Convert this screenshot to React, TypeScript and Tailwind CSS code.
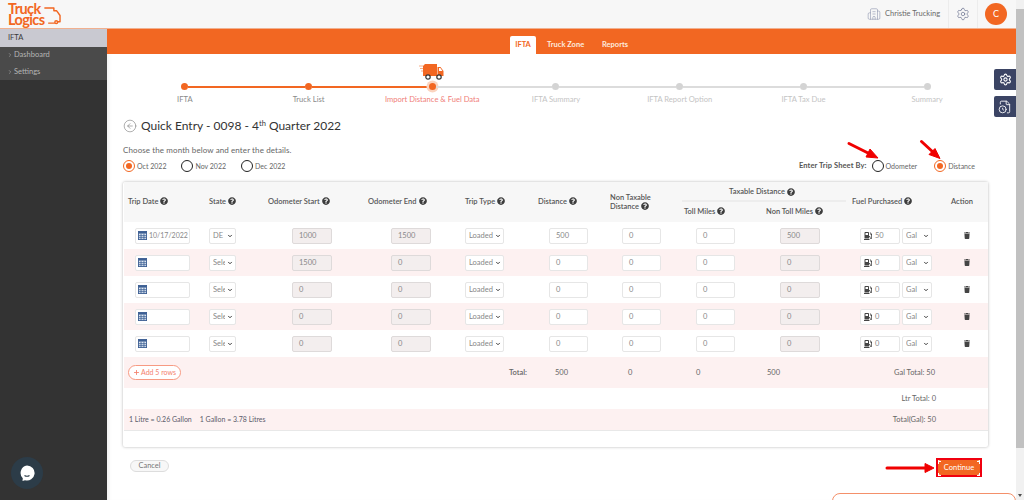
import React from "react";
import { Building2, Settings, ChevronRight, ChevronDown, CircleArrowLeft, FileClock, Plus } from "lucide-react";
import { FaQuestionCircle, FaTrash, FaGasPump } from "react-icons/fa";

const GRID = "grid grid-cols-[76px_62px_99px_100px_74px_73px_74px_84px_80px_100px_41px]";

function Help() {
  return <FaQuestionCircle className="inline-block w-[8px] h-[8px] text-[#3d3d3d] ml-[2px] align-[-1px]" />;
}

function Cal() {
  return (
    <svg viewBox="0 0 10 10" className="w-[9px] h-[9px] shrink-0">
      <rect x="0.5" y="0.5" width="9" height="9" fill="#dfe7f2" stroke="#3c5f93" />
      <rect x="0.5" y="0.5" width="9" height="2.4" fill="#3c5f93" />
      <path d="M3.4 3v6.5M6.6 3v6.5M.5 5.2h9M.5 7.4h9" stroke="#3c5f93" strokeWidth="0.9" />
    </svg>
  );
}

function Radio({ on, label, cls }: { on?: boolean; label: string; cls?: string }) {
  return (
    <span className={"flex items-center gap-[2px] " + (cls || "")}>
      <span className={"w-3 h-3 rounded-full border-[1.5px] flex items-center justify-center " + (on ? "border-[#f26722]" : "border-[#222]")}>
        {on && <span className="w-[6px] h-[6px] rounded-full bg-[#f26722]" />}
      </span>
      <span className="text-[7px] text-[#666]">{label}</span>
    </span>
  );
}

function Box({ v, ro, w = "w-10" }: { v?: string; ro?: boolean; w?: string }) {
  return (
    <div className={`${w} h-4 rounded-[2px] border flex items-center pl-[6px] text-[7.5px] text-[#888] ${ro ? "bg-[#f3eeee] border-[#dedada]" : "bg-white border-[#e6e6e6]"}`}>
      {v}
    </div>
  );
}

function Sel({ v, w, tw }: { v: string; w: string; tw: string }) {
  return (
    <div className={`${w} h-4 rounded-[2px] border border-[#e6e6e6] bg-white text-[7.5px] text-[#888] pl-[3px] flex items-center justify-between pr-[2px]`}>
      <span className={`${tw} overflow-hidden whitespace-nowrap`}>{v}</span>
      <ChevronDown className="w-[6px] h-[6px] text-[#222] shrink-0" strokeWidth={3.5} />
    </div>
  );
}

const rows = [
  { date: "10/17/2022", st: "DE", os: "1000", oe: "1500", d: "500", nt: "500", f: "50" },
  { date: "", st: "Select", os: "1500", oe: "0", d: "0", nt: "0", f: "0" },
  { date: "", st: "Select", os: "0", oe: "0", d: "0", nt: "0", f: "0" },
  { date: "", st: "Select", os: "0", oe: "0", d: "0", nt: "0", f: "0" },
  { date: "", st: "Select", os: "0", oe: "0", d: "0", nt: "0", f: "0" },
];

const steps = [
  ["IFTA", "text-[#8a8a8a]"],
  ["Truck List", "text-[#8a8a8a]"],
  ["Import Distance & Fuel Data", "text-[#f0807a]"],
  ["IFTA Summary", "text-[#c4c4c4]"],
  ["IFTA Report Option", "text-[#c4c4c4]"],
  ["IFTA Tax Due", "text-[#c4c4c4]"],
  ["Summary", "text-[#c4c4c4]"],
];

function Dot({ c }: { c: string }) {
  return <span className={`w-[7px] h-[7px] rounded-full shrink-0 ${c}`} />;
}

export default function App() {
  return (
    <div className="relative w-[1024px] h-[500px] overflow-hidden flex bg-white font-[Lato,sans-serif]">
      <div className="w-[1016px] h-full flex flex-col">
        {/* top bar */}
        <header className="h-[29px] shrink-0 bg-[#f7f7f7] flex items-center border-b border-[#f1b08f]">
          <div className="relative w-[107px] h-full pl-[8px]">
            <div className="w-[42px] text-[#f26722] text-[14.5px] leading-[11px] font-bold tracking-[-0.6px] pt-[3px]">Truck Logics</div>
            <svg viewBox="0 0 20 19" className="absolute left-[42px] top-[7px] w-[19px] h-[18px]" fill="none" stroke="#f26722" strokeWidth="1.5">
              <path d="M3 1h9.500v3h3l3.500 5v6.500h-2.500M7 17h6" strokeLinejoin="round" strokeLinecap="round" />
              <circle cx="15" cy="16" r="1.500" />
            </svg>
          </div>
          <div className="flex-1" />
          <Building2 className="w-[14px] h-[14px] text-[#8c93ad]" strokeWidth={1} />
          <span className="ml-[4px] w-[62px] whitespace-nowrap text-[7.5px] text-[#6a6a6a]">Christie Trucking</span>
          <span className="ml-[1px] w-px h-full bg-[#ececec]" />
          <span className="w-[28px] flex justify-center">
            <Settings className="w-[14px] h-[14px] text-[#6b7391]" strokeWidth={1.2} />
          </span>
          <span className="w-px h-full bg-[#ececec]" />
          <span className="ml-[7px] mr-[9px] w-[22px] h-[22px] rounded-full bg-[#f26722] text-white text-[9px] flex items-center justify-center">C</span>
        </header>

        <div className="flex-1 flex min-h-0">
          {/* sidebar */}
          <aside className="w-[107px] shrink-0 bg-[#333333] text-[7.5px]">
            <div className="h-[18px] bg-[#c9c9d1] text-[#3a3a3a] flex items-center pl-2">IFTA</div>
            <div className="h-[33px] bg-[#4a4a4a] text-[#b5b5b5] flex flex-col">
              <div className="h-4 flex items-center pl-[7px] gap-[1px]"><ChevronRight className="w-[6px] h-[6px]" />Dashboard</div>
              <div className="h-[17px] flex items-center pl-[7px] gap-[1px]"><ChevronRight className="w-[6px] h-[6px]" />Settings</div>
            </div>
          </aside>

          <main className="flex-1 flex flex-col min-w-0 shadow-[inset_4px_0_4px_-3px_rgba(0,0,0,0.08)]">
            {/* orange nav */}
            <nav className="h-[25px] shrink-0 bg-[#f26722] flex items-end pl-[403px] text-[7.5px] font-bold text-[#fdeadf]">
              <span className="w-[26px] h-[18px] bg-white rounded-t-[2px] text-[#f26722] flex items-center justify-center">IFTA</span>
              <span className="ml-[11px] w-[37px] h-[18px] flex items-center whitespace-nowrap">Truck Zone</span>
              <span className="ml-[18px] h-[18px] flex items-center">Reports</span>
            </nav>

            <div className="pl-[16px] pr-[27px]">
              {/* stepper */}
              <div className="grid grid-cols-7 h-[18px] items-end mt-[8px]">
                <svg viewBox="0 0 26 17" className="col-start-3 justify-self-center w-[26px] h-[17px]">
                  <path d="M6 1h12v12H4V3z" fill="#f26722" />
                  <path d="M18.5 4h3l3 4v5h-6z" fill="#f26722" />
                  <path d="M20 5h1.400l2 3H20z" fill="#fff" />
                  <path d="M0 3h4M1 5.500h3M2 8h2" stroke="#f59a6b" strokeWidth="0.8" />
                  <circle cx="9" cy="14" r="2.200" fill="#fff" stroke="#333" strokeWidth="1.200" />
                  <circle cx="20" cy="14" r="2.200" fill="#fff" stroke="#333" strokeWidth="1.200" />
                </svg>
              </div>
              <div className="flex items-center h-[11px] mt-[1px] px-[58px]">
                <Dot c="bg-[#f26722]" />
                <span className="flex-1 h-[2px] bg-[#f26722]" />
                <Dot c="bg-[#f26722]" />
                <span className="flex-1 h-[2px] bg-[#f26722]" />
                <span className="w-[7px] h-[7px] rounded-full bg-[#f26722] shrink-0 shadow-[0_0_0_2.5px_#fbd4bf]" />
                <span className="flex-1 h-[2px] bg-[#dcdcdc]" />
                <Dot c="bg-[#d4d4d4]" />
                <span className="flex-1 h-[2px] bg-[#dcdcdc]" />
                <Dot c="bg-[#d4d4d4]" />
                <span className="flex-1 h-[2px] bg-[#dcdcdc]" />
                <Dot c="bg-[#d4d4d4]" />
                <span className="flex-1 h-[2px] bg-[#dcdcdc]" />
                <Dot c="bg-[#d4d4d4]" />
              </div>
              <div className="grid grid-cols-7 text-center text-[7.6px] leading-[10px] mt-[2px]">
                {steps.map(([s, c]) => (
                  <span key={s} className={c}>{s}</span>
                ))}
              </div>

              {/* title */}
              <div className="flex items-center mt-[14px] h-[16px] text-[#333]">
                <CircleArrowLeft className="w-[14px] h-[14px] text-[#777]" strokeWidth={1} />
                <h1 className="ml-[4px] text-[12px] leading-none">
                  Quick Entry - 0098 - 4<sup className="text-[7.5px] leading-none">th</sup> Quarter 2022
                </h1>
              </div>

              <p className="text-[8px] text-[#666] mt-[11px] leading-[10px] tracking-[0.1px]">Choose the month below and enter the details.</p>

              <div className="flex items-center h-3 mt-[5px] pr-[14px]">
                <Radio on label="Oct 2022" />
                <Radio label="Nov 2022" cls="ml-[15px]" />
                <Radio label="Dec 2022" cls="ml-[15px]" />
                <span className="ml-auto text-[7.5px] font-bold text-[#555] tracking-[0.1px]">Enter Trip Sheet By:</span>
                <Radio label="Odometer" cls="ml-[5px]" />
                <Radio on label="Distance" cls="ml-[17px]" />
              </div>

              {/* card */}
              <section className="mt-[10px] h-[265px] w-[865px] rounded-[2px] shadow-[0_0_3px_rgba(0,0,0,0.3)] pl-px flex flex-col text-[7.5px] text-[#666]">
                <div className={`${GRID} h-[40px] shrink-0 bg-[#f7f7f7] items-center font-semibold text-[#555]`}>
                  <div className="pl-[4px]">Trip Date<Help /></div>
                  <div className="pl-[9px]">State<Help /></div>
                  <div className="pl-[6px]">Odometer Start<Help /></div>
                  <div className="pl-[7px]">Odometer End<Help /></div>
                  <div className="pl-[4px]">Trip Type<Help /></div>
                  <div className="pl-[3px]">Distance<Help /></div>
                  <div className="pl-[2px] leading-[9px]">Non Taxable<br />Distance<Help /></div>
                  <div className="col-span-2 h-full flex flex-col">
                    <div className="h-[20px] border-b-2 border-[#ededed] flex items-center justify-center pr-[4px] pt-[1px]">Taxable Distance<Help /></div>
                    <div className="flex-1 flex items-center pl-[2px]">
                      <span className="w-[82px]">Toll Miles<Help /></span>
                      <span>Non Toll Miles<Help /></span>
                    </div>
                  </div>
                  <div className="pl-[6px]">Fuel Purchased<Help /></div>
                  <div className="pl-[5px]">Action</div>
                </div>

                {rows.map((r, i) => (
                  <div key={i} className={`${GRID} h-[27px] shrink-0 items-center ${i % 2 ? "bg-[#fdf1f1]" : "bg-white"}`}>
                    <div className="pl-[11px]">
                      <div className="w-[55px] h-4 rounded-[2px] border border-[#e6e6e6] bg-white flex items-center pl-[2px] gap-[2px] text-[#888] text-[7px]">
                        <Cal />{r.date}
                      </div>
                    </div>
                    <div className="pl-[9px]"><Sel v={r.st} w="w-[27px]" tw="w-[12px]" /></div>
                    <div className="pl-[30px]"><Box v={r.os} ro /></div>
                    <div className="pl-[30px]"><Box v={r.oe} ro /></div>
                    <div className="pl-[4px]"><Sel v="Loaded" w="w-[39px]" tw="w-[26px]" /></div>
                    <div className="pl-[14px]"><Box v={r.d} w="w-[39px]" /></div>
                    <div className="pl-[14px]"><Box v="0" w="w-[39px]" /></div>
                    <div className="pl-[14px]"><Box v="0" w="w-[39px]" /></div>
                    <div className="pl-[14px]"><Box v={r.nt} ro /></div>
                    <div className="pl-[14px] flex gap-[2px]">
                      <div className="w-10 h-4 rounded-[2px] border border-[#e6e6e6] bg-white flex items-center pl-[3px] gap-[3px] text-[#888]">
                        <FaGasPump className="w-[8px] h-[8px] text-[#444]" />{r.f}
                      </div>
                      <Sel v="Gal" w="w-[30px]" tw="w-[14px]" />
                    </div>
                    <div className="flex justify-center"><FaTrash className="w-[6px] h-[7px] text-[#444]" /></div>
                  </div>
                ))}

                <div className={`${GRID} h-[31px] shrink-0 items-center bg-[#fdf1f1]`}>
                  <div className="col-span-4 pl-[4px]">
                    <span className="inline-flex items-center h-[15px] px-[4px] rounded-full border border-[#f79a82] bg-white text-[#f4826e] text-[7px]">
                      <Plus className="w-[7px] h-[7px] mr-[1px]" strokeWidth={3} />Add 5 rows
                    </span>
                  </div>
                  <div className="pl-[48px] font-semibold">Total:</div>
                  <div className="pl-[20px]">500</div>
                  <div className="pl-[20px]">0</div>
                  <div className="pl-[14px]">0</div>
                  <div className="pl-px">500</div>
                  <div className="col-span-2 text-right pr-[52px]">Gal Total: 50</div>
                </div>
                <div className="h-[21px] shrink-0 bg-white flex items-center justify-end pr-[52px]">Ltr Total: 0</div>
                <div className="h-[22px] shrink-0 bg-[#fdf1f1] border-b border-[#e8e8e8] flex items-center justify-between pl-[5px] pr-[52px]">
                  <span className="text-[#5b5b6b] text-[7px]">1 Litre = 0.26 Gallon<span className="ml-[8px]">1 Gallon = 3.78 Litres</span></span>
                  <span>Total(Gal): 50</span>
                </div>
              </section>

              {/* actions */}
              <div className="flex items-start justify-between mt-[11px] w-[852px] ml-[7px]">
                <button className="h-3 w-[39px] mt-[2px] rounded-full border border-[#ddd] bg-[#f7f7f7] text-[7.5px] text-[#777] leading-none">Cancel</button>
                <button className="w-[46px] h-[19px] border-2 border-[#f0000f] bg-white flex items-center justify-center">
                  <span className="w-full h-full rounded-[3px] bg-[#f26722] text-white text-[7.5px] flex items-center justify-center">Continue</span>
                </button>
              </div>
            </div>
          </main>
        </div>
      </div>

      {/* scrollbar */}
      <div className="w-2 h-full bg-[#f1f1f1] flex flex-col">
        <div className="h-[9px]" />
        <div className="h-[439px] bg-[#c1c1c1]" />
        <div className="flex-1 flex items-end justify-center pb-[3px]">
          <span className="w-0 h-0 border-x-[2.5px] border-x-transparent border-t-[3px] border-t-[#505050]" />
        </div>
      </div>

      {/* floating side buttons */}
      <div className="absolute left-[994px] top-[69px] w-[22px] h-[21px] bg-[#3b4464] rounded-l-[2px] flex items-center justify-center">
        <Settings className="w-[13px] h-[13px] text-white" strokeWidth={2} />
      </div>
      <div className="absolute left-[994px] top-[96px] w-[22px] h-[21px] bg-[#3b4464] rounded-l-[2px] flex items-center justify-center">
        <FileClock className="w-[14px] h-[14px] text-white" strokeWidth={1.5} />
      </div>

      {/* chat widget */}
      <div className="absolute left-[11px] top-[457px] w-8 h-8 rounded-full bg-[#2c3c48] flex items-center justify-center">
        <svg viewBox="0 0 16 16" className="w-4 h-4">
          <path d="M8 0.500a7.500 7.500 0 1 1-2 14.700L3.500 16l.3-2.800A7.500 7.500 0 0 1 8 .5z" fill="#fff" />
          <path d="M5.500 10.500q2.500 1.500 5 0" stroke="#2c3c48" strokeWidth="1.200" fill="none" />
        </svg>
      </div>

      {/* bottom-right popup peek */}
      <div className="absolute left-[832px] top-[493px] w-[184px] h-[20px] bg-white border border-[#f4906a] rounded-t-[8px]" />

      {/* annotation arrows */}
      <svg className="absolute left-0 top-0 w-[1024px] h-[500px] pointer-events-none" viewBox="0 0 1024 500">
        <g fill="#f00000" stroke="#f00000">
          <path d="M849 143.500L870 154" strokeWidth="3" strokeLinecap="round" />
          <path d="M878 158l-12-1 4-8z" />
          <path d="M921.500 141.500L934 153" strokeWidth="3" strokeLinecap="round" />
          <path d="M940 158.500l-11-4 6-6z" />
          <path d="M887 468h38" strokeWidth="3" strokeLinecap="round" />
          <path d="M934 468l-9 -4.500v9z" strokeWidth="1" />
        </g>
      </svg>
      <div className="absolute left-[938px] top-[461px] w-[42px] h-[15px] pointer-events-none">
        <span className="absolute left-0 top-0 w-[3px] h-[3px] border-l border-t border-white" />
        <span className="absolute right-0 top-0 w-[3px] h-[3px] border-r border-t border-white" />
        <span className="absolute left-0 bottom-0 w-[3px] h-[3px] border-l border-b border-white" />
        <span className="absolute right-0 bottom-0 w-[3px] h-[3px] border-r border-b border-white" />
      </div>
    </div>
  );
}
